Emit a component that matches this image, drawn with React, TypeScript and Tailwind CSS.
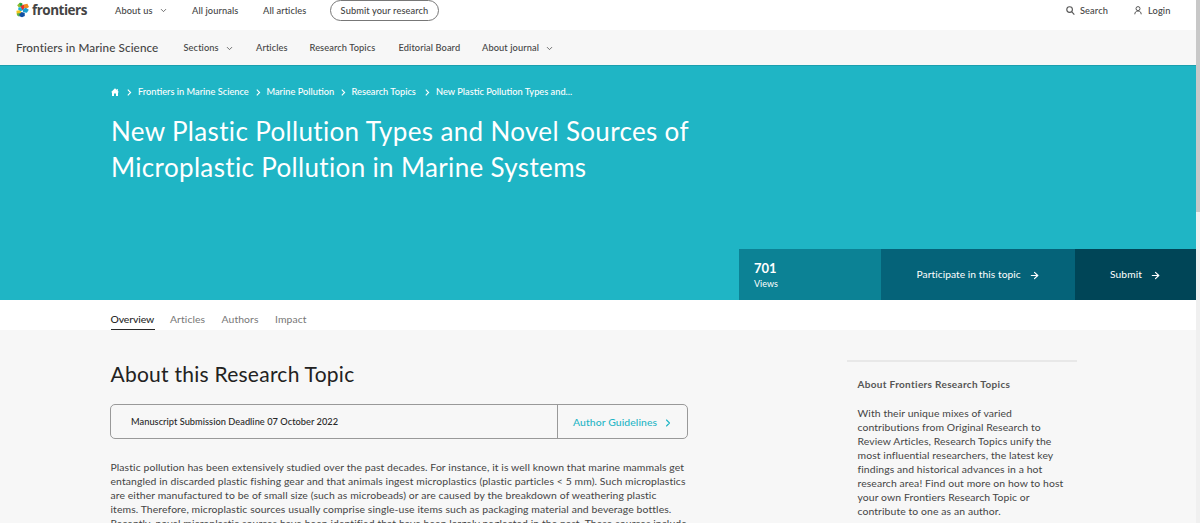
import React from 'react';
import { ChevronDown, ChevronRight, ArrowRight } from 'lucide-react';

const navLinks = [
    { label: 'Sections', width: 'w-[72.5px]', dropdown: true },
    { label: 'Articles', width: 'w-[53.5px]' },
    { label: 'Research Topics', width: 'w-[89px]' },
    { label: 'Editorial Board', width: 'w-[83.5px]' },
    { label: 'About journal', width: 'w-[80px]', dropdown: true },
];

const crumbs = [
    { label: 'Frontiers in Marine Science', width: 'w-[110.5px]' },
    { label: 'Marine Pollution', width: 'w-[67px]' },
    { label: 'Research Topics', width: 'w-[66.5px]' },
    { label: 'New Plastic Pollution Types and...', width: 'w-[138px]' },
];

const tabs = [
    { label: 'Overview', width: 'w-[44px]' },
    { label: 'Articles', width: 'w-[36px]' },
    { label: 'Authors', width: 'w-[38px]' },
    { label: 'Impact', width: 'w-[34px]' },
];

const bodyLines = [
    'Plastic pollution has been extensively studied over the past decades. For instance, it is well known that marine mammals get',
    'entangled in discarded plastic fishing gear and that animals ingest microplastics (plastic particles < 5 mm). Such microplastics',
    'are either manufactured to be of small size (such as microbeads) or are caused by the breakdown of weathering plastic',
    'items. Therefore, microplastic sources usually comprise single-use items such as packaging material and beverage bottles.',
    'Recently, novel microplastic sources have been identified that have been largely neglected in the past. These sources include',
];

const asideLines = [
    'With their unique mixes of varied',
    'contributions from Original Research to',
    'Review Articles, Research Topics unify the',
    'most influential researchers, the latest key',
    'findings and historical advances in a hot',
    'research area! Find out more on how to host',
    'your own Frontiers Research Topic or',
    'contribute to one as an author.',
];

function Logo() {
    return (
        <svg width="14" height="16" viewBox="0 0 14 16" className="shrink-0">
            <path d="M1.2 3.2 4 .6l2.6 1-.8 3-3 .9z" fill="#8cbd2e" />
            <path d="M3.2 1.6 5.6.9l1.1 2.5-1.9 1z" fill="#17a04b" />
            <path d="M4.8 4 8 2.4l1 3.2-2.4 2.6-2-1.2z" fill="#e52e2c" />
            <path d="m8 2.4 3.4-.7 1.6 3.3-3.3 1.9-1.8-1.3z" fill="#f18a1f" />
            <path d="m2.8 5.3 2.5.1 1.3 3-2.6.8-2-2z" fill="#1ab0d8" />
            <path d="m6.8 7.4 2.8-1.6 3.2 2-1.9 2.9-3.8-.5z" fill="#1b9dd0" />
            <path d="m.4 8.8 3.1-.6 2.2 2-1.4 2.4H.8z" fill="#f4c319" />
            <path d="m.8 11.5 2.8-.4 1.2 1.7-2 1.7-1.6-1z" fill="#5db449" />
            <path d="m3.4 12.1 2.3-2.2 3 1.2.1 3-2.8 1.2-2.600-1z" fill="#114fa2" />
        </svg>
    );
}

function TopBar() {
    return (
        <header className="flex h-[30px] items-start bg-white text-[9.25px] font-medium tracking-[0.1px] text-[#444]">
            <div className="flex w-[115px] items-center pl-4 pt-[2px]">
                <Logo />
                <span className="-mt-px ml-[2px] font-['Open_Sans',sans-serif] text-[13.5px] font-bold leading-4 tracking-[-0.5px] text-[#444]">frontiers</span>
            </div>
            <div className="flex h-[21px] w-[77px] items-center">
                <span className="w-[43.5px]">About us</span>
                <ChevronDown size={9} strokeWidth={2} />
            </div>
            <span className="w-[71px] leading-[21px]">All journals</span>
            <span className="w-[67px] leading-[21px]">All articles</span>
            <button className="flex h-[21px] w-[109px] items-center justify-center whitespace-nowrap rounded-full border border-[#777]">
                Submit your research
            </button>
            <div className="ml-auto flex h-[21px] items-center">
                <svg width="9" height="9" viewBox="0 0 8 8" fill="none" stroke="#555" className="mr-[5px]">
                    <circle cx="3.2" cy="3.2" r="2.5" />
                    <path d="m5 5 2.4 2.6" />
                </svg>
                <span className="w-[54px]">Search</span>
                <svg width="8" height="9" viewBox="0 0 8 9" fill="none" stroke="#555" className="mr-[6px]">
                    <circle cx="4" cy="2.6" r="2" />
                    <path d="M.8 8.3C.8 6.3 2 5 4 5s3.2 1.3 3.2 3.3" />
                </svg>
                <span className="mr-6 w-[24px]">Login</span>
            </div>
        </header>
    );
}

function JournalNav() {
    return (
        <nav className="flex h-[35px] items-center bg-[#f7f7f7] pt-px text-[9.25px] font-medium tracking-[0.1px] text-[#444]">
            <span className="w-[183.5px] whitespace-nowrap pl-4 text-[11.7px] tracking-[0.1px]">Frontiers in Marine Science</span>
            {navLinks.map((link) => (
                <div key={link.label} className={`flex items-center justify-between whitespace-nowrap ${link.width}`}>
                    <span>{link.label}</span>
                    {link.dropdown && (
                        <span className={link.label === 'Sections' ? 'mr-[22px]' : 'mr-[8px]'}>
                            <ChevronDown size={9} strokeWidth={2} />
                        </span>
                    )}
                </div>
            ))}
        </nav>
    );
}

function Hero() {
    return (
        <section className="flex h-[235px] flex-col justify-between border-t border-[#1a9fae] bg-[#1fb5c5] text-white">
            <div className="pl-[111px] pt-5">
                <div className="flex h-3 items-center text-[9.25px] font-medium">
                    <svg width="8" height="8" viewBox="0 0 8 8" fill="white" className="mr-px shrink-0">
                        <path d="M4 .3 0 4.200h1V8h2V5.500h2V8h2V4.200h1L6.800 3V1H5.800v1z" />
                    </svg>
                    {crumbs.map((crumb) => (
                        <div key={crumb.label} className="flex items-center">
                            <svg width="5" height="7" viewBox="0 0 5 7" fill="none" stroke="white" strokeWidth="1.1" className="ml-[7px] mr-[6px]">
                                <path d="m.8.7 2.8 2.8L.8 6.3" />
                            </svg>
                            <span className={`whitespace-nowrap ${crumb.width}`}>{crumb.label}</span>
                        </div>
                    ))}
                </div>
                <h1 className="mt-[15px] whitespace-nowrap text-[26px] leading-[36px] tracking-[0.34px]">
                    New Plastic Pollution Types and Novel Sources of
                    <br />
                    Microplastic Pollution in Marine Systems
                </h1>
            </div>
            <div className="ml-auto flex h-[51px] w-[457px]">
                <div className="w-[142px] bg-[#0c8295] pl-[15px] pt-3">
                    <div className="text-[13px] font-bold leading-[15px]">701</div>
                    <div className="mt-[2px] text-[9px] leading-[12px]">Views</div>
                </div>
                <div className="flex w-[194px] items-center bg-[#056379] pl-[35.5px] pt-px text-[10.25px] tracking-[0.05px]">
                    <span className="w-[112px] whitespace-nowrap">Participate in this topic</span>
                    <ArrowRight size={11} strokeWidth={2.5} className="shrink-0" />
                </div>
                <div className="flex w-[121px] items-center bg-[#004557] pl-[35px] pt-px text-[10.25px] tracking-[0.1px]">
                    <span className="w-[40px]">Submit</span>
                    <ArrowRight size={11} strokeWidth={2.5} />
                </div>
            </div>
        </section>
    );
}

function Tabs() {
    return (
        <div className="flex h-[30px] gap-[15.5px] bg-white pl-[110.5px] text-[10.4px] tracking-[0.1px] text-[#777]">
            {tabs.map((tab, i) => (
                <span
                    key={tab.label}
                    className={`h-[30px] whitespace-nowrap pt-[9px] leading-[20px] ${tab.width} ${i === 0 ? 'border-b border-[#282828] font-medium tracking-[-0.1px] text-[#282828]' : ''}`}
                >
                    {tab.label}
                </span>
            ))}
        </div>
    );
}

function Topic() {
    return (
        <main className="w-[578px]">
            <h2 className="mt-[30px] whitespace-nowrap pl-[0.5px] text-[21px] leading-7 tracking-[0.25px] text-[#222]">About this Research Topic</h2>
            <div className="mt-4 flex h-[35px] rounded-[5px] border border-[#999]">
                <div className="flex w-[447px] items-center whitespace-nowrap border-r border-[#999] pl-5 text-[9.25px] font-medium tracking-[0.03px] text-[#282828]">
                    Manuscript Submission Deadline 07 October 2022
                </div>
                <div className="flex items-center pl-[15px] pt-[2px] text-[10.4px] font-medium tracking-[0.1px] text-[#1fb5c5]">
                    <span className="w-[89px] whitespace-nowrap">Author Guidelines</span>
                    <ChevronRight size={12} strokeWidth={2.2} />
                </div>
            </div>
            <div className="mt-[21px] whitespace-nowrap pl-[0.5px] text-[10.4px] leading-[14px] tracking-[0.1px] text-[#444]">
                {bodyLines.map((line) => (
                    <p key={line}>{line}</p>
                ))}
            </div>
        </main>
    );
}

function Aside() {
    return (
        <aside className="ml-[158.5px] mt-[30px] h-fit w-[230px] border-t-2 border-[#e8e8e8] pl-[11px]">
            <h3 className="mt-[15px] whitespace-nowrap text-[10px] font-bold leading-[14px] tracking-[0.32px] text-[#555]">About Frontiers Research Topics</h3>
            <div className="mt-[15px] whitespace-nowrap text-[10.4px] leading-[14px] tracking-[0.1px] text-[#444]">
                {asideLines.map((line) => (
                    <p key={line}>{line}</p>
                ))}
            </div>
        </aside>
    );
}

export default function App() {
    return (
        <div className="flex h-[523px] w-[1200px] overflow-hidden font-['Lato','Open_Sans',sans-serif]">
            <div className="w-[1196px] shrink-0">
                <TopBar />
                <JournalNav />
                <Hero />
                <Tabs />
                <div className="flex h-[193px] overflow-hidden bg-[#f7f7f7] pl-[110px]">
                    <Topic />
                    <Aside />
                </div>
            </div>
            <div className="h-full w-1 bg-[#f0f0f0]">
                <div className="h-[212px] bg-[#c8c8c8]"></div>
            </div>
        </div>
    );
}
